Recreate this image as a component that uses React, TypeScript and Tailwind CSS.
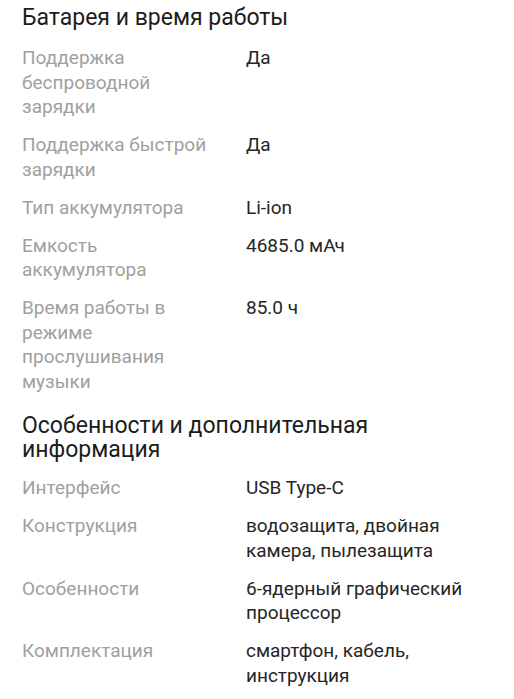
import React from "react";

type Row = { label: string; value: string };

const battery: Row[] = [
  { label: "Поддержка беспроводной зарядки", value: "Да" },
  { label: "Поддержка быстрой зарядки", value: "Да" },
  { label: "Тип аккумулятора", value: "Li-ion" },
  { label: "Емкость аккумулятора", value: "4685.0 мАч" },
  { label: "Время работы в режиме прослушивания музыки", value: "85.0 ч" },
];

const extra: Row[] = [
  { label: "Интерфейс", value: "USB Type-C" },
  { label: "Конструкция", value: "водозащита, двойная камера, пылезащита" },
  { label: "Особенности", value: "6-ядерный графический процессор" },
  { label: "Комплектация", value: "смартфон, кабель, инструкция" },
];

function Rows({ rows }: { rows: Row[] }) {
  return (
    <div className="grid grid-cols-[224px_240px] gap-y-[13.5px]">
      {rows.map((r) => (
        <React.Fragment key={r.label}>
          <div className="pr-[24px] text-[19px] leading-[24.5px] text-[#a0a0a0]">{r.label}</div>
          <div className="text-[19px] leading-[24.5px] text-[#262626]">{r.value}</div>
        </React.Fragment>
      ))}
    </div>
  );
}

export default function App() {
  return (
    <div
      className="min-h-[699px] w-[514px] bg-white px-[22px] pt-[5px]"
      style={{ fontFamily: "Roboto, 'Noto Sans', sans-serif" }}
    >
      <h2 className="mb-[16px] text-[23px] leading-[25px] text-[#1c1c1c]">Батарея и время работы</h2>
      <Rows rows={battery} />
      <h2 className="mb-[14px] mt-[20px] w-[470px] text-[23px] leading-[24px] text-[#1c1c1c]">
        Особенности и дополнительная информация
      </h2>
      <Rows rows={extra} />
    </div>
  );
}
